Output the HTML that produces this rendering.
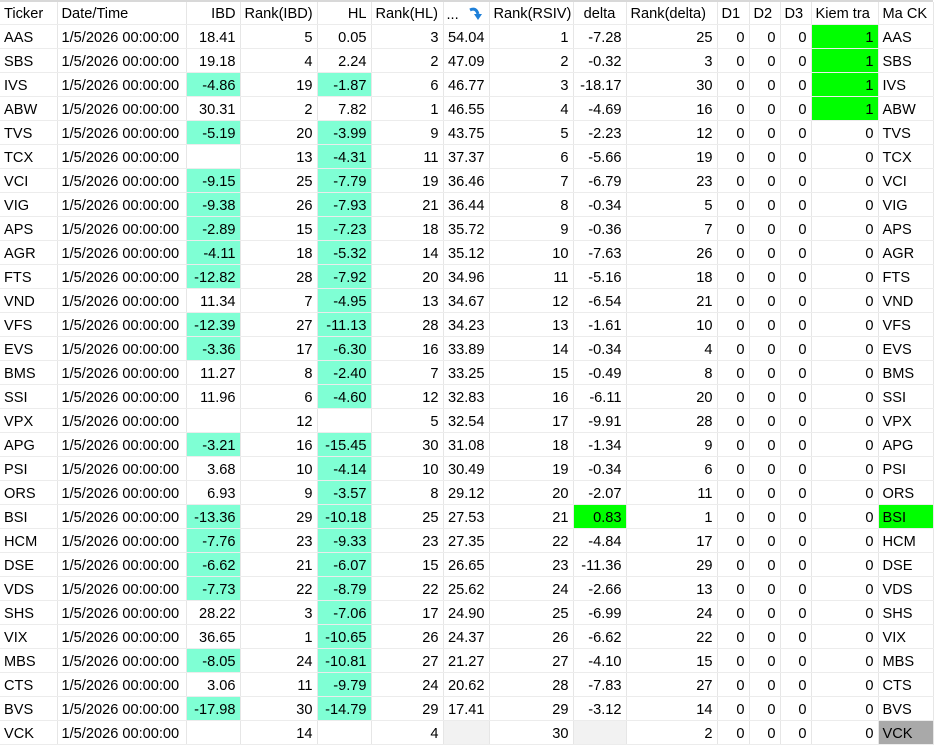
<!DOCTYPE html><html><head><style>
body{margin:0;width:940px;height:751px;background:#fff;overflow:hidden;font-family:"Liberation Sans",sans-serif;font-size:14.6px;color:#000}
#w{position:absolute;left:0;top:0;width:933px;border-top:2px solid #d8d8d8}
table{border-collapse:collapse;table-layout:fixed;width:933px}
td{height:21px;line-height:16px;padding:2px 4px 0 4px;border-right:1px solid #e6e6e6;border-bottom:1px solid #ececec;white-space:nowrap;overflow:hidden;text-align:right}
td.l{text-align:left}
.a{background:#7fffd4}.g{background:#00ff00}.d{background:#a9a9a9}.e{background:#f2f2f2}
tr.h td{height:20px}
</style></head><body><div id="w"><table>
<colgroup><col style="width:57px"><col style="width:129px"><col style="width:54px"><col style="width:77px"><col style="width:54px"><col style="width:72px"><col style="width:46px"><col style="width:84px"><col style="width:53px"><col style="width:91px"><col style="width:32px"><col style="width:31px"><col style="width:31px"><col style="width:67px"><col style="width:55px"></colgroup>
<tr class="h"><td class="l">Ticker</td><td class="l">Date/Time</td><td>IBD</td><td class="l">Rank(IBD)</td><td>HL</td><td class="l">Rank(HL)</td><td class="l" style="padding-left:3px">... <svg width="16" height="16" viewBox="0 0 16 16" style="vertical-align:-3px;margin-left:5px"><path d="M2 4 Q8 1 10 8" stroke="#1e7fd8" stroke-width="3" fill="none"/><path d="M6 8 L14 8 L10 14 Z" fill="#1e7fd8"/></svg></td><td class="l">Rank(RSIV)</td><td style="text-align:center">delta</td><td class="l">Rank(delta)</td><td class="l">D1</td><td class="l">D2</td><td class="l">D3</td><td class="l">Kiem tra</td><td class="l">Ma CK</td></tr>
<script>
var R=[["AAS","18.41",5,"0.05",3,"54.04",1,"-7.28",25,1],["SBS","19.18",4,"2.24",2,"47.09",2,"-0.32",3,1],["IVS","-4.86",19,"-1.87",6,"46.77",3,"-18.17",30,1],["ABW","30.31",2,"7.82",1,"46.55",4,"-4.69",16,1],["TVS","-5.19",20,"-3.99",9,"43.75",5,"-2.23",12,0],["TCX","",13,"-4.31",11,"37.37",6,"-5.66",19,0],["VCI","-9.15",25,"-7.79",19,"36.46",7,"-6.79",23,0],["VIG","-9.38",26,"-7.93",21,"36.44",8,"-0.34",5,0],["APS","-2.89",15,"-7.23",18,"35.72",9,"-0.36",7,0],["AGR","-4.11",18,"-5.32",14,"35.12",10,"-7.63",26,0],["FTS","-12.82",28,"-7.92",20,"34.96",11,"-5.16",18,0],["VND","11.34",7,"-4.95",13,"34.67",12,"-6.54",21,0],["VFS","-12.39",27,"-11.13",28,"34.23",13,"-1.61",10,0],["EVS","-3.36",17,"-6.30",16,"33.89",14,"-0.34",4,0],["BMS","11.27",8,"-2.40",7,"33.25",15,"-0.49",8,0],["SSI","11.96",6,"-4.60",12,"32.83",16,"-6.11",20,0],["VPX","",12,"",5,"32.54",17,"-9.91",28,0],["APG","-3.21",16,"-15.45",30,"31.08",18,"-1.34",9,0],["PSI","3.68",10,"-4.14",10,"30.49",19,"-0.34",6,0],["ORS","6.93",9,"-3.57",8,"29.12",20,"-2.07",11,0],["BSI","-13.36",29,"-10.18",25,"27.53",21,"0.83",1,0],["HCM","-7.76",23,"-9.33",23,"27.35",22,"-4.84",17,0],["DSE","-6.62",21,"-6.07",15,"26.65",23,"-11.36",29,0],["VDS","-7.73",22,"-8.79",22,"25.62",24,"-2.66",13,0],["SHS","28.22",3,"-7.06",17,"24.90",25,"-6.99",24,0],["VIX","36.65",1,"-10.65",26,"24.37",26,"-6.62",22,0],["MBS","-8.05",24,"-10.81",27,"21.27",27,"-4.10",15,0],["CTS","3.06",11,"-9.79",24,"20.62",28,"-7.83",27,0],["BVS","-17.98",30,"-14.79",29,"17.41",29,"-3.12",14,0],["VCK","",14,"",4,"",30,"",2,0]];
var h="";R.forEach(function(r){var n=function(v){return v.charAt(0)=="-"?' class="a"':''};var bsi=r[0]=="BSI",vck=r[0]=="VCK";
h+='<tr><td class="l">'+r[0]+'</td><td class="l">1/5/2026 00:00:00</td><td'+n(r[1])+'>'+r[1]+'</td><td>'+r[2]+'</td><td'+n(r[3])+'>'+r[3]+'</td><td>'+r[4]+'</td><td'+(vck?' class="e"':'')+'>'+r[5]+'</td><td>'+r[6]+'</td><td'+(bsi?' class="g"':vck?' class="e"':'')+'>'+r[7]+'</td><td>'+r[8]+'</td><td>0</td><td>0</td><td>0</td><td'+(r[9]?' class="g"':'')+'>'+r[9]+'</td><td class="l'+(bsi?' g':vck?' d':'')+'">'+r[0]+'</td></tr>';});
document.write(h);
</script>
</table></div></body></html>
